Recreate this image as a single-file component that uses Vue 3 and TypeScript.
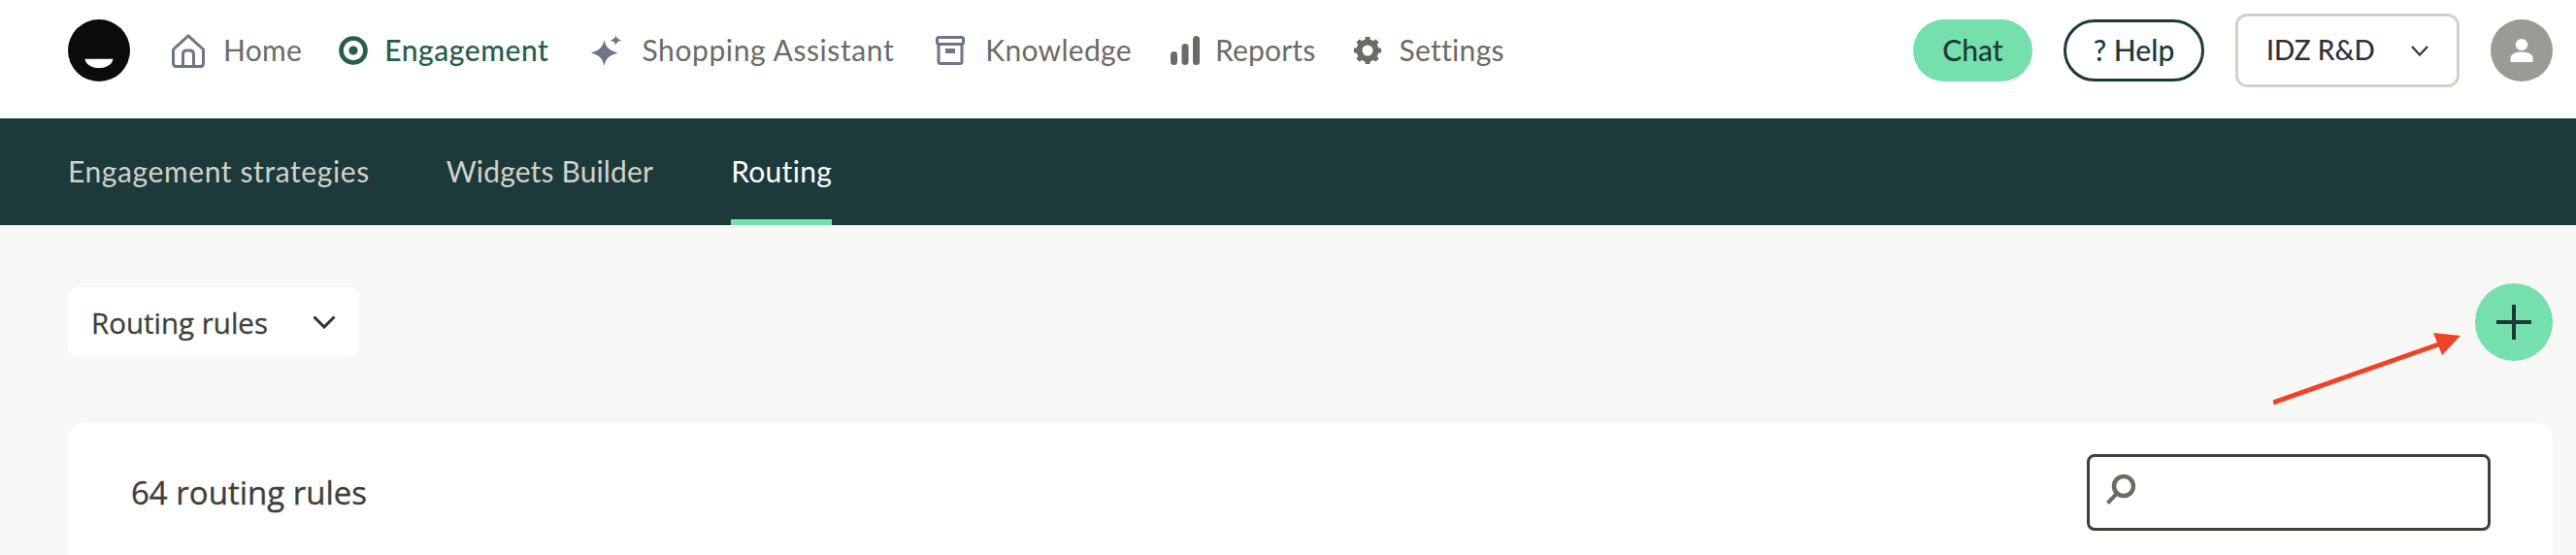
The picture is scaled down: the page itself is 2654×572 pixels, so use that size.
<script setup lang="ts">
const tabs: { label: string; active?: boolean }[] = [
  { label: 'Engagement strategies' },
  { label: 'Widgets Builder' },
  { label: 'Routing', active: true },
]
</script>

<template>
  <div class="page">
    <header class="topbar">
      <svg class="logo" viewBox="0 0 64 64" width="64" height="64" aria-label="logo">
        <circle cx="32" cy="32" r="32" fill="#0a0c0a" />
        <path d="M17.500 40.700 H46.500 C46 46.500 39 50 32 50 C25 50 18 46.500 17.500 40.700 Z" fill="#fff" />
      </svg>
      <nav class="nav">
        <a class="nav-item home">
          <svg viewBox="0 0 34 35" width="34" height="35" fill="none" stroke="#6f7488" stroke-width="3" stroke-linejoin="round">
            <path d="M1.500 16 L17 1.800 L32.500 16 V30 C32.500 32 31.500 33.500 29.500 33.500 H4.500 C2.500 33.500 1.500 32 1.500 30 Z" />
            <path d="M11.500 33 V21 C11.500 18.500 13 17 15 17 H19 C21 17 22.500 18.500 22.500 21 V33" />
          </svg>
          <span>Home</span>
        </a>
        <a class="nav-item active engagement">
          <svg viewBox="0 0 30 30" width="30" height="30">
            <circle cx="15" cy="15" r="12.500" fill="none" stroke="#275d4d" stroke-width="4.600" />
            <circle cx="15" cy="15" r="4.600" fill="#275d4d" />
          </svg>
          <span>Engagement</span>
        </a>
        <a class="nav-item shopping">
          <svg viewBox="0 0 32 32" width="32" height="32" fill="#6f7488">
            <path d="M13.500 5 C15 12.500 18 15.500 27.500 18.500 C18 21.500 15 24.500 13.500 32 C12 24.500 9 21.500 0 18.500 C9 15.500 12 12.500 13.500 5 Z" />
            <path d="M25.500 0 C26 3 27.500 4.500 31.500 5.500 C27.500 6.500 26 8 25.500 11 C25 8 23.500 6.500 19.500 5.500 C23.500 4.500 25 3 25.500 0 Z" />
          </svg>
          <span>Shopping Assistant</span>
        </a>
        <a class="nav-item knowledge">
          <svg viewBox="0 0 30 30" width="30" height="30" fill="none">
            <rect x="1.500" y="1.500" width="27" height="7" rx="2" stroke="#6f7488" stroke-width="3" />
            <path d="M3 8 V27 C3 28 4 28.500 5 28.500 H25 C26 28.500 27 28 27 27 V8" stroke="#6f7488" stroke-width="3" />
            <rect x="10" y="13" width="10" height="5" fill="#6f7488" />
          </svg>
          <span>Knowledge</span>
        </a>
        <a class="nav-item reports">
          <svg viewBox="0 0 30 30" width="30" height="30" fill="#6b6b66">
            <rect x="0" y="16" width="7" height="14" rx="3.500" />
            <rect x="11.500" y="8" width="7" height="22" rx="3.500" />
            <rect x="23" y="0" width="7" height="30" rx="3.500" />
          </svg>
          <span>Reports</span>
        </a>
        <a class="nav-item settings">
          <svg viewBox="0 0 28 28" width="28" height="28">
            <circle cx="14" cy="14" r="8.500" fill="none" stroke="#6b6b66" stroke-width="6" />
            <g stroke="#6b6b66" stroke-width="5">
              <path d="M14 0 V5 M14 23 V28 M0 14 H5 M23 14 H28 M4 4 L7.500 7.500 M20.500 20.500 L24 24 M24 4 L20.500 7.500 M7.500 20.500 L4 24" />
            </g>
          </svg>
          <span>Settings</span>
        </a>
      </nav>
      <div class="actions">
        <button class="pill chat" type="button">Chat</button>
        <button class="pill help" type="button">? Help</button>
        <button class="account" type="button">
          <span>IDZ R&amp;D</span>
          <svg viewBox="0 0 18 11" width="18" height="11" fill="none" stroke="#2e303a" stroke-width="2.200">
            <path d="M1 1 L9 9.500 L17 1" />
          </svg>
        </button>
        <span class="avatar">
          <svg viewBox="0 0 24 24" width="24" height="24" fill="#fff">
            <ellipse cx="12" cy="6" rx="6.300" ry="6" />
            <path d="M0.500 24 V20 C0.500 16 5 13.500 12 13.500 C19 13.500 23.500 16 23.500 20 V24 Z" />
          </svg>
        </span>
      </div>
    </header>

    <div class="tabs">
      <a v-for="tab in tabs" :key="tab.label" class="tab" :class="{ on: tab.active }">{{ tab.label }}</a>
    </div>

    <main class="content">
      <div class="toolbar">
        <button class="select" type="button">
          <span>Routing rules</span>
          <svg viewBox="0 0 24 14" width="24" height="14" fill="none" stroke="#2e303a" stroke-width="3">
            <path d="M1.500 1.500 L12 12 L22.500 1.500" />
          </svg>
        </button>
        <button class="add" type="button" aria-label="Add">
          <svg viewBox="0 0 36 36" width="36" height="36" stroke="#1c3a3a" stroke-width="4">
            <path d="M18 0 V36 M0 18 H36" />
          </svg>
        </button>
      </div>
      <section class="card">
        <h2>64 routing rules</h2>
        <div class="search">
          <svg viewBox="0 0 30 31" width="30" height="31" fill="none" stroke="#6b6b66">
            <circle cx="18" cy="12" r="10" stroke-width="4.500" />
            <path d="M10.500 20 L1.500 29.500" stroke-width="4" />
          </svg>
        </div>
      </section>
    </main>

    <svg class="arrow" viewBox="0 0 200 80" width="200" height="80">
      <path d="M0 74 L176 12" stroke="#ee4326" stroke-width="5" fill="none" />
      <path d="M193 5 L165 2 L174 25 Z" fill="#ee4326" />
    </svg>
  </div>
</template>

<style>
html, body { margin: 0; overflow: hidden; background: #f7f7f5; }
</style>

<style scoped>
.page {
  position: relative;
  height: 572px;
  overflow: hidden;
  background: #f7f7f5;
  font-family: "Lato", sans-serif;
}
.topbar {
  height: 122px;
  box-sizing: border-box;
  background: #fff;
  display: flex;
  align-items: center;
  padding: 0 24px 18px 70px;
}
.logo { flex: none; }
.nav { display: flex; align-items: center; margin-left: 43px; gap: 42px; }
.nav-item {
  display: flex;
  align-items: center;
  gap: 19px;
  font-size: 30px;
  letter-spacing: 0.3px;
  color: #6b6b66;
  white-space: nowrap;
}
.nav-item span { padding-bottom: 2px; }
.nav-item svg { flex: none; }
.nav-item.active { color: #275d4d; font-weight: 500; gap: 17px; letter-spacing: 0.55px; margin-left: -4px; }
.shopping { gap: 20px; letter-spacing: 0.6px; margin-left: 2px; }
.knowledge { gap: 21px; margin-left: 1px; }
.reports { gap: 16px; margin-left: -2px; letter-spacing: 0.2px; }
.settings { gap: 18px; margin-left: -2px; }
.actions { margin-left: auto; display: flex; align-items: center; }
.pill {
  height: 64px;
  box-sizing: border-box;
  border-radius: 32px;
  font: inherit;
  font-size: 30px;
  color: #1c3a3a;
  padding: 0 0 2px;
}
.chat { width: 123px; background: #75e0ab; border: 0; font-weight: 500; }
.help { width: 145px; margin-left: 32px; background: #fff; border: 3px solid #1c3a3a; font-weight: 500; }
.account {
  width: 231px;
  height: 76px;
  margin-left: 32px;
  box-sizing: border-box;
  background: #fff;
  border: 3px solid #d2d2ca;
  border-radius: 12px;
  display: flex;
  align-items: center;
  justify-content: space-between;
  padding: 0 29px 0 29px;
  font: inherit;
  font-size: 28px;
  font-weight: 500;
  color: #2e303a;
}
.account span { padding-bottom: 2px; }
.avatar {
  width: 64px;
  height: 64px;
  margin-left: 32px;
  border-radius: 50%;
  background: #9b9b95;
  display: flex;
  align-items: center;
  justify-content: center;
}
.tabs {
  height: 110px;
  box-sizing: border-box;
  background: #1b3a39;
  display: flex;
  padding-left: 70px;
  gap: 80px;
}
.tab {
  display: flex;
  align-items: center;
  font-size: 30px;
  letter-spacing: 0.6px;
  color: #d2d2ca;
  border-bottom: 6px solid transparent;
  box-sizing: border-box;
  padding-top: 3px;
}
.tab:nth-child(2) { letter-spacing: 0.15px; margin-left: -1px; }
.tab:nth-child(3) { letter-spacing: 0.3px; }
.tab.on { color: #fff; border-bottom-color: #75e0ab; }
.content { padding: 60px 24px 0 70px; }
.toolbar {
  display: flex;
  align-items: center;
  justify-content: space-between;
  height: 80px;
}
.select {
  width: 300px;
  height: 72px;
  box-sizing: border-box;
  border: 0;
  border-radius: 10px;
  background: #fff;
  display: flex;
  align-items: center;
  justify-content: space-between;
  padding: 0 24px;
  font-family: "Open Sans", sans-serif;
  font-size: 29.500px;
  -webkit-text-stroke: 0.3px #3f3f3a;
  color: #3f3f3a;
}
.add {
  width: 80px;
  height: 80px;
  border: 0;
  padding: 0;
  border-radius: 50%;
  background: #75e0ab;
  display: flex;
  align-items: center;
  justify-content: center;
}
.card {
  margin-top: 64px;
  height: 300px;
  background: #fff;
  border-radius: 16px;
  display: flex;
  align-items: flex-start;
  justify-content: space-between;
  padding: 32px 64px 0 65px;
}
.card h2 {
  margin: 0;
  height: 79px;
  display: flex;
  align-items: center;
  font-family: "Open Sans", sans-serif;
  font-size: 33px;
  font-weight: 400;
  -webkit-text-stroke: 0.35px #3f3f3a;
  color: #3f3f3a;
}
.search {
  width: 416px;
  height: 79px;
  box-sizing: border-box;
  border: 3px solid #3f3f3a;
  border-radius: 8px;
  display: flex;
  align-items: center;
  padding-left: 17px;
}
.search svg { margin-top: -6px; }
.arrow { position: absolute; left: 2342px; top: 341px; }
</style>
